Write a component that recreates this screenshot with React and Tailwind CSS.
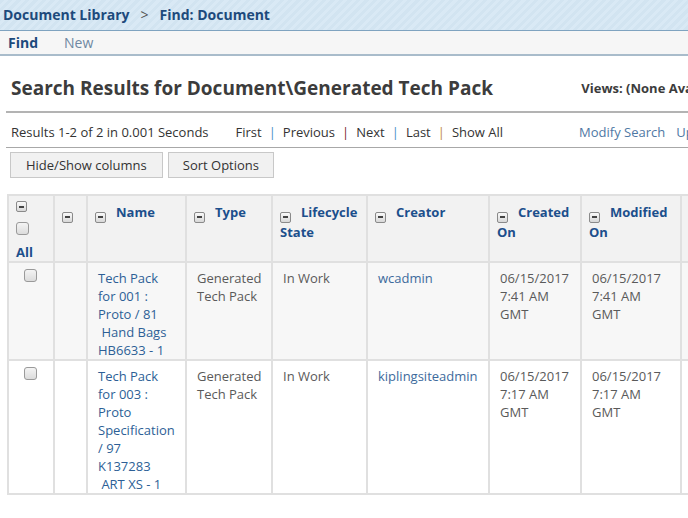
import React from "react";

// Small collapse toggle shown in table headers
function MinusBox() {
  return (
    <span className="inline-flex items-center justify-center w-[11px] h-[11px] rounded-[2px] border border-[#8a8a8a] bg-gradient-to-b from-[#fafafa] to-[#d8d8d8] align-[-1px]">
      <span className="block w-[5px] h-[2px] bg-[#444]" />
    </span>
  );
}

function Checkbox() {
  return (
    <span className="inline-block w-[13px] h-[13px] rounded-[3px] border border-[#9a9a9a] bg-gradient-to-b from-[#f4f4f4] to-[#dcdcdc]" />
  );
}

const columns = [
  { key: "blank", label: null, w: "w-[33px]" },
  { key: "name", label: "Name", w: "w-[99px]" },
  { key: "type", label: "Type", w: "w-[86px]" },
  { key: "state", label: "Lifecycle State", w: "w-[95px]" },
  { key: "creator", label: "Creator", w: "w-[122px]" },
  { key: "created", label: "Created On", w: "w-[92px]" },
  { key: "modified", label: "Modified On", w: "w-[100px]" },
];

const rows = [
  {
    name: ["Tech Pack", "for 001 :", "Proto / 81", "\u00a0Hand Bags", "HB6633 - 1"],
    type: ["Generated", "Tech Pack"],
    state: "In Work",
    creator: "wcadmin",
    date: ["06/15/2017", "7:41 AM", "GMT"],
    bg: "bg-[#f7f7f7]",
  },
  {
    name: ["Tech Pack", "for 003 :", "Proto", "Specification", "/ 97", "K137283", "\u00a0ART XS - 1"],
    type: ["Generated", "Tech Pack"],
    state: "In Work",
    creator: "kiplingsiteadmin",
    date: ["06/15/2017", "7:17 AM", "GMT"],
    bg: "bg-white",
  },
];

function Lines({ items }) {
  return items.map((t, i) => <div key={i}>{t}</div>);
}

export default function App() {
  return (
    <div
      className="w-[688px] h-[518px] overflow-hidden bg-white text-[13px] leading-[18px]"
      style={{ fontFamily: '"Open Sans", "Noto Sans", sans-serif' }}
    >
      {/* Breadcrumb bar */}
      <div className="h-[31px] flex items-center px-[3px] border-b border-[#7fa3c0] bg-[repeating-linear-gradient(135deg,#d2e4f1_0px,#d2e4f1_3px,#d9e9f5_3px,#d9e9f5_6px)] text-[14px] font-bold text-[#1d4a7c]">
        <span>Document Library</span>
        <span className="mx-[11px] font-normal text-[#555]">&gt;</span>
        <span>Find: Document</span>
      </div>

      {/* Tabs */}
      <div className="h-[25px] flex items-center bg-[#f6f6f6] border-b-2 border-[#a9bccb] px-[8px] text-[14px] pt-[1px]">
        <span className="font-bold text-[#1d4a7c]">Find</span>
        <span className="ml-[26px] text-[#6f88a2]">New</span>
      </div>

      {/* Page title */}
      <div className="flex items-center justify-between pl-[11px] pt-[20px] pb-[11px] pr-0">
        <h1 className="text-[19px] font-bold text-[#3c3c3c] leading-[24px] whitespace-nowrap">
          Search Results for Document\Generated Tech Pack
        </h1>
        <span className="text-[13px] font-bold text-[#3c3c3c] whitespace-nowrap mr-[-45px]">Views: (None Available)</span>
      </div>

      <div className="ml-[6px] h-[2px] bg-[#b3b3b3]" />

      {/* Results / paging */}
      <div className="ml-[6px] h-[35px] flex items-center pl-[5px] pt-[3px] border-b border-[#a8a8a8] whitespace-nowrap text-[#333]">
        <span>Results 1-2 of 2 in 0.001 Seconds</span>
        <span className="ml-[27px]">First</span>
        <span className="mx-[7px] text-[#4a90c8]">|</span>
        <span>Previous</span>
        <span className="mx-[7px] text-[#7a1e2e]">|</span>
        <span>Next</span>
        <span className="mx-[7px] text-[#4a90c8]">|</span>
        <span>Last</span>
        <span className="mx-[7px] text-[#c08a3e]">|</span>
        <span>Show All</span>
        <span className="ml-[76px] text-[#4f78a4]">Modify Search</span>
        <span className="ml-[11px] text-[#4f78a4]">Update</span>
      </div>

      {/* Buttons */}
      <div className="flex gap-[5px] pl-[10px] pt-[4px]">
        <button className="h-[26px] px-[15px] bg-[#f1f1f1] border border-[#c8c8c8] text-[#333] leading-none">
          Hide/Show columns
        </button>
        <button className="h-[26px] px-[14px] bg-[#f1f1f1] border border-[#c8c8c8] text-[#333] leading-none">
          Sort Options
        </button>
      </div>

      {/* Results table */}
      <div className="pl-[7px] pt-[16px]">
        <table className="border-collapse table-fixed w-[760px]">
          <thead>
            <tr className="bg-[#f2f2f2] align-top">
              <th className="w-[46px] h-[65px] border-2 border-[#e0e0e0] pt-[5px] pl-[7px] text-left font-bold text-[#1c4f8c]">
                <div className="flex flex-col items-start">
                  <MinusBox />
                  <div className="mt-[9px]">
                    <Checkbox />
                  </div>
                  <div className="mt-[4px]">All</div>
                </div>
              </th>
              {columns.map((c) => (
                <th
                  key={c.key}
                  className={`${c.w} border-2 border-[#e0e0e0] pt-[7px] pl-[7px] pr-[4px] text-left font-bold text-[#1c4f8c]`}
                >
                  <MinusBox />
                  {c.label && <span className="ml-[10px]">{c.label}</span>}
                </th>
              ))}
              <th className="border-2 border-[#e0e0e0]" />
            </tr>
          </thead>
          <tbody>
            {rows.map((r, i) => (
              <tr key={i} className={`${r.bg} align-top`}>
                <td className="border-2 border-[#e0e0e0] pt-[5px] pl-[15px]">
                  <Checkbox />
                </td>
                <td className="border-2 border-[#e0e0e0]" />
                <td className="border-2 border-[#e0e0e0] pt-[6px] pl-[10px] text-[#2d5f96]">
                  <Lines items={r.name} />
                </td>
                <td className="border-2 border-[#e0e0e0] pt-[6px] pl-[10px] text-[#5a5a5a]">
                  <Lines items={r.type} />
                </td>
                <td className="border-2 border-[#e0e0e0] pt-[6px] pl-[10px] text-[#5a5a5a]">{r.state}</td>
                <td className="border-2 border-[#e0e0e0] pt-[6px] pl-[10px] text-[#3d6a9c]">{r.creator}</td>
                <td className="border-2 border-[#e0e0e0] pt-[6px] pl-[10px] text-[#5a5a5a]">
                  <Lines items={r.date} />
                </td>
                <td className="border-2 border-[#e0e0e0] pt-[6px] pl-[10px] text-[#5a5a5a]">
                  <Lines items={r.date} />
                </td>
                <td className="border-2 border-[#e0e0e0]" />
              </tr>
            ))}
          </tbody>
        </table>
      </div>
    </div>
  );
}
